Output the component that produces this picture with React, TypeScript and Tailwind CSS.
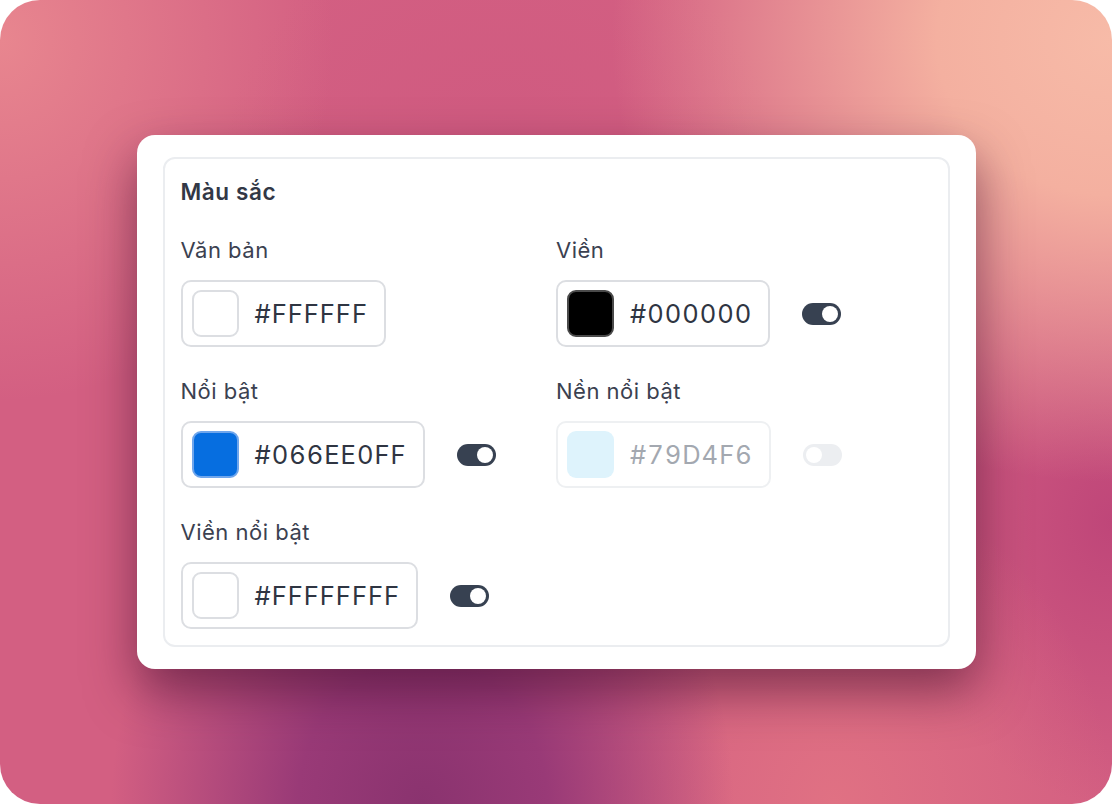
import React from "react";

function Toggle({ on, disabled }: { on: boolean; disabled?: boolean }) {
  return (
    <div
      className={
        "flex h-[22px] w-[39px] items-center rounded-full px-[3px] " +
        (disabled ? "bg-[#eceef1] justify-start" : "bg-[#374151] justify-end")
      }
    >
      <div className="h-[16px] w-[16px] rounded-full bg-white" />
    </div>
  );
}

function ColorInput({
  value,
  swatchClass,
  disabled,
}: {
  value: string;
  swatchClass: string;
  disabled?: boolean;
}) {
  return (
    <div
      className={
        "flex h-[67px] items-center rounded-[10px] border-2 pl-[9px] pr-[16px] " +
        (disabled ? "border-[#eef0f2]" : "border-[#dcdee2]")
      }
    >
      <div className={"h-[47px] w-[47px] rounded-[9px] " + swatchClass} />
      <span
        className={
          "ml-[16px] text-[25.5px] leading-none tracking-[1px] tabular-nums " +
          (disabled ? "text-[#a3a8b0]" : "text-[#2f3542]")
        }
      >
        {value}
      </span>
    </div>
  );
}

function Field({
  label,
  children,
}: {
  label: string;
  children: React.ReactNode;
}) {
  return (
    <div className="flex flex-col">
      <div className="h-[28px] text-[22px] leading-[28px] tracking-[0.5px] text-[#3b4150]">{label}</div>
      <div className="mt-[16px] flex items-center gap-[32px]">{children}</div>
    </div>
  );
}

export default function App() {
  return (
    <div className="h-[804px] w-[1112px] bg-white" style={{ fontFamily: "Inter, 'Noto Sans', sans-serif" }}>
      <div className="flex h-full w-full items-center justify-center rounded-[40px] bg-[#d35f82] bg-[image:radial-gradient(ellipse_45%_55%_at_100%_5%,#f7bba8_0%,#f4b0a0_35%,rgba(240,160,155,0)_100%),radial-gradient(ellipse_30%_45%_at_0%_5%,#e8868f_0%,rgba(232,134,143,0)_100%),radial-gradient(ellipse_28%_45%_at_38%_100%,#8a336f_0%,#993a77_40%,rgba(153,58,119,0)_100%),radial-gradient(ellipse_25%_40%_at_75%_100%,#e07183_0%,rgba(224,113,131,0)_100%),radial-gradient(ellipse_20%_35%_at_100%_65%,#bf4679_0%,rgba(191,70,121,0)_100%),radial-gradient(ellipse_25%_30%_at_45%_20%,#cf5a80_0%,rgba(207,90,128,0)_100%)]">
        <div className="w-[839px] rounded-[18px] bg-white px-[26px] py-[22px] shadow-[0_22px_50px_rgba(60,10,40,0.55)]">
          <div className="rounded-[12px] border-2 border-[#ebedf0] px-[16px] pb-[16px] pt-[18px]">
            <div className="h-[30px] text-[22.5px] font-semibold leading-[30px] tracking-[0.6px] text-[#323846]">Màu sắc</div>
            <div className="mt-[29px] grid grid-cols-2 gap-y-[30px]">
              <Field label="Văn bản">
                <ColorInput value="#FFFFFF" swatchClass="bg-white border-2 border-[#dcdee2]" />
              </Field>
              <Field label="Viền">
                <ColorInput value="#000000" swatchClass="bg-black border-2 border-[#4a4a4a]" />
                <Toggle on />
              </Field>
              <Field label="Nổi bật">
                <ColorInput value="#066EE0FF" swatchClass="bg-[#066ee0] border-2 border-[#6fa6ec]" />
                <Toggle on />
              </Field>
              <Field label="Nền nổi bật">
                <ColorInput value="#79D4F6" disabled swatchClass="bg-[#def3fc]" />
                <Toggle on={false} disabled />
              </Field>
              <Field label="Viền nổi bật">
                <ColorInput value="#FFFFFFFF" swatchClass="bg-white border-2 border-[#dcdee2]" />
                <Toggle on />
              </Field>
            </div>
          </div>
        </div>
      </div>
    </div>
  );
}
